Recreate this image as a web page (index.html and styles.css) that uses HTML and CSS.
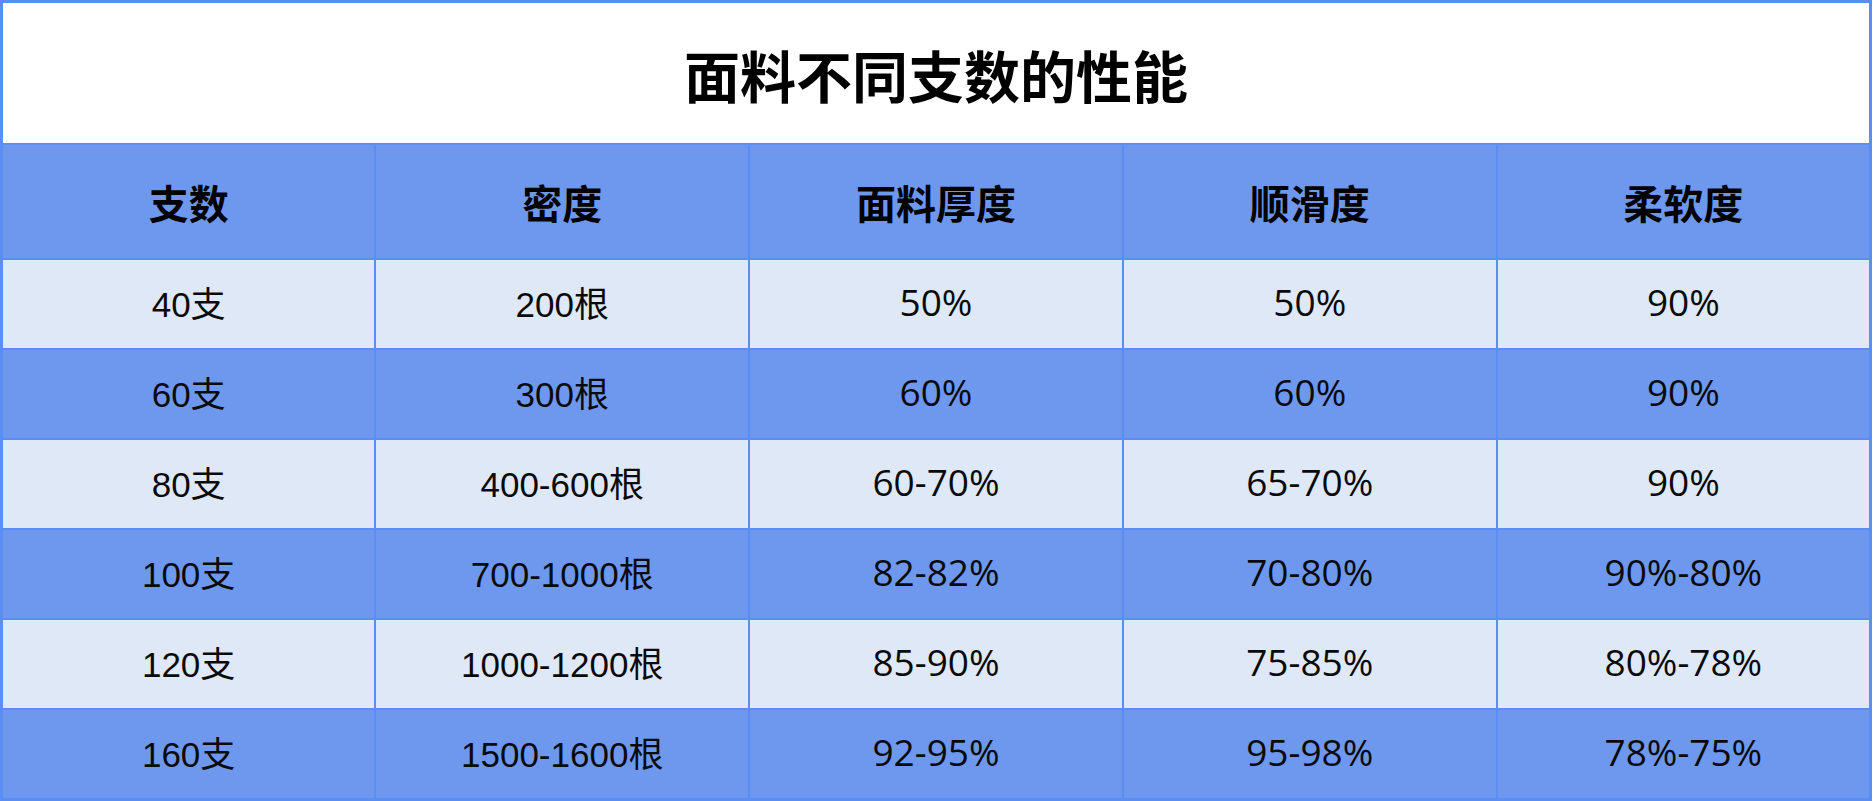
FILE: index.html
```html
<!DOCTYPE html>
<html lang="zh">
<head>
<meta charset="utf-8">
<link rel="stylesheet" href="styles.css">
</head>
<body>
<table class="spec">
  <tr class="title-row"><th colspan="5" class="title">面料不同支数的性能</th></tr>
  <tr class="head-row">
    <th>支数</th><th>密度</th><th>面料厚度</th><th>顺滑度</th><th>柔软度</th>
  </tr>
  <tr class="light"><td class="sans">40支</td><td class="sans">200根</td><td>50%</td><td>50%</td><td>90%</td></tr>
  <tr class="dark"><td class="sans">60支</td><td class="sans">300根</td><td>60%</td><td>60%</td><td>90%</td></tr>
  <tr class="light"><td class="sans">80支</td><td class="sans">400-600根</td><td>60-70%</td><td>65-70%</td><td>90%</td></tr>
  <tr class="dark"><td class="sans">100支</td><td class="sans">700-1000根</td><td>82-82%</td><td>70-80%</td><td>90%-80%</td></tr>
  <tr class="light"><td class="sans">120支</td><td class="sans">1000-1200根</td><td>85-90%</td><td>75-85%</td><td>80%-78%</td></tr>
  <tr class="dark"><td class="sans">160支</td><td class="sans">1500-1600根</td><td>92-95%</td><td>95-98%</td><td>78%-75%</td></tr>
</table>
</body>
</html>
```
FILE: styles.css
```css
html, body {
  margin: 0;
  padding: 0;
  background: #ffffff;
}
.spec {
  width: 1872px;
  border-collapse: collapse;
  table-layout: fixed;
  border: 3px solid #5b8ef2;
  font-family: "Noto Sans CJK SC", "Noto Sans", sans-serif;
  color: #000;
}
.spec th, .spec td {
  border: 2px solid #5b8ef2;
  text-align: center;
  vertical-align: middle;
  padding: 0;
}
.title-row .title {
  height: 140px;
  background: #ffffff;
  font-size: 56px;
  font-weight: 700;
  border-bottom: 2px solid #5b8ef2;
}
.head-row th {
  height: 113px;
  background: #6e98ee;
  font-size: 40px;
  font-weight: 700;
}
.spec td {
  height: 82px;
  padding-bottom: 6px;
  font-family: "Open Sans", "Noto Sans CJK SC", sans-serif;
  font-size: 37px;
  font-weight: 400;
  color: #0a0a0a;
}
.spec td.sans {
  font-family: "Liberation Sans", "Noto Sans CJK SC", sans-serif;
  font-size: 35px;
}
.light td { background: #dee8f6; }
.dark td { background: #6e98ee; }
```
